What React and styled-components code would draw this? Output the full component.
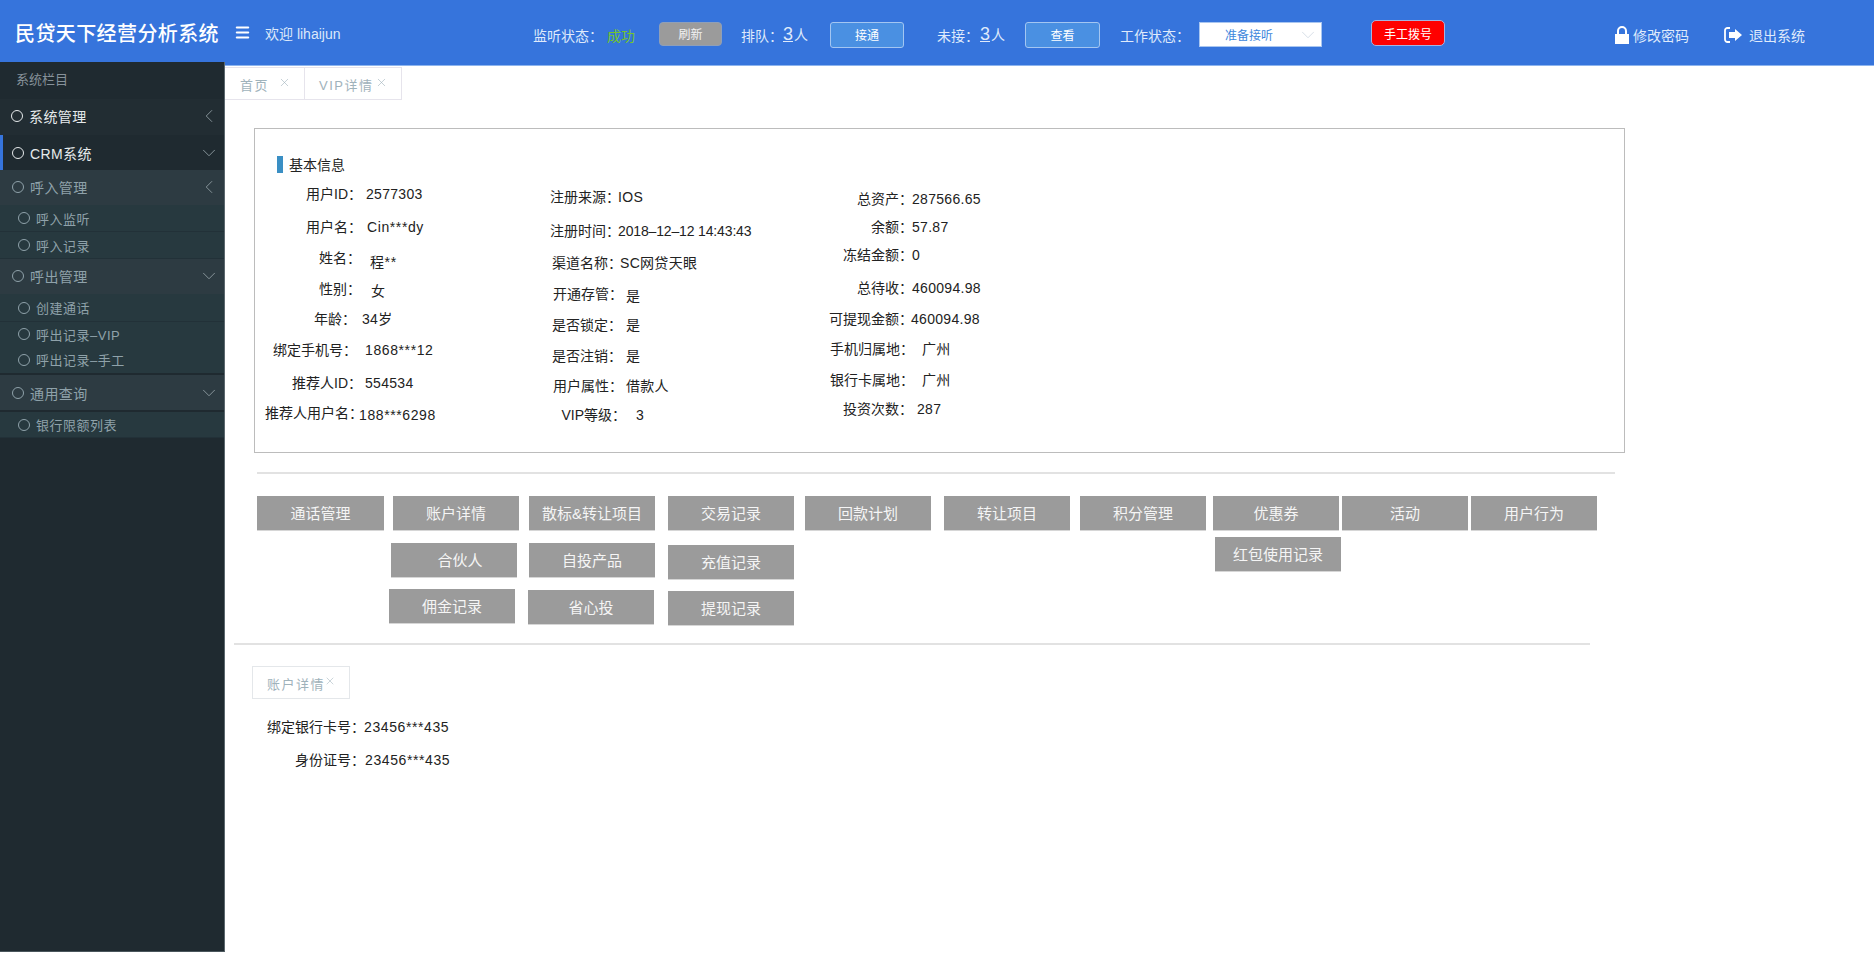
import React from "react";
import styled, { createGlobalStyle } from "styled-components";
import { ChevronDown, ChevronLeft, Menu, X } from "lucide-react";

const FONT = `"Liberation Sans", "Noto Sans CJK SC", sans-serif`;

const column1 = [
  ["用户ID：", "2577303", 6, 362, 366],
  ["用户名：", "Cin***dy", 13, 362, 367],
  ["姓名：", "程**", 11, 361, 370, 4],
  ["性别：", "女", 11, 361, 371, 2],
  ["年龄：", "34岁", 10, 356, 362],
  ["绑定手机号：", "1868***12", 11, 357, 365],
  ["推荐人ID：", "554534", 13, 362, 365],
  ["推荐人用户名：", "188***6298", 10, 363, 359, 2],
];

const column2 = [
  ["注册来源：", "IOS", 9, 620, 618],
  ["注册时间：", "2018–12–12 14:43:43", 14, 620, 618],
  ["渠道名称：", "SC网贷天眼", 12, 622, 620],
  ["开通存管：", "是", 11, 623, 626, 2],
  ["是否锁定：", "是", 11, 622, 626],
  ["是否注销：", "是", 11, 622, 626],
  ["用户属性：", "借款人", 10, 623, 626],
  ["VIP等级：", "3", 9, 626, 636],
];

const column3 = [
  ["总资产：", "287566.65", 11, 913, 912],
  ["余额：", "57.87", 8, 913, 912],
  ["冻结金额：", "0", 8, 913, 912],
  ["总待收：", "460094.98", 13, 913, 912],
  ["可提现金额：", "460094.98", 11, 913, 911],
  ["手机归属地：", "广州", 10, 914, 922],
  ["银行卡属地：", "广州", 11, 914, 922],
  ["投资次数：", "287", 9, 913, 917],
];

const accountRows = [
  ["绑定银行卡号：", "23456***435", 18, 365, 364],
  ["身份证号：", "23456***435", 13, 365, 365],
];

const actionColumns = [
  { ml: 32, w: 128, items: [{ t: "通话管理", w: 127 }] },
  {
    ml: 4,
    w: 130,
    items: [
      { t: "账户详情", ml: 4 },
      { t: "合伙人", ml: 2, mt: 12, pl: 12 },
      { t: "佣金记录", mt: 11 },
    ],
  },
  {
    ml: 9,
    w: 127,
    items: [
      { t: "散标&转让项目", ml: 1 },
      { t: "自投产品", ml: 1, mt: 12 },
      { t: "省心投", mt: 12 },
    ],
  },
  {
    ml: 13,
    w: 126,
    items: [{ t: "交易记录" }, { t: "充值记录", mt: 14 }, { t: "提现记录", mt: 11 }],
  },
  { ml: 11, w: 126, items: [{ t: "回款计划" }] },
  { ml: 13, w: 126, items: [{ t: "转让项目" }] },
  { ml: 10, w: 126, items: [{ t: "积分管理" }] },
  {
    ml: 7,
    w: 128,
    items: [{ t: "优惠券" }, { t: "红包使用记录", ml: 2, mt: 6 }],
  },
  { ml: 1, w: 126, items: [{ t: "活动" }] },
  { ml: 3, w: 126, items: [{ t: "用户行为" }] },
];

function App() {
  return (
    <Page>
      <GlobalStyle />
      <Header>
        <Slot $w={219}>
          <Brand>民贷天下经营分析系统</Brand>
        </Slot>
        <Slot $w={31}>
          <Menu size={17} strokeWidth={3} color="#fff" />
        </Slot>
        <Slot $w={269}>
          <Welcome>欢迎 lihaijun</Welcome>
        </Slot>
        <Toolbar>
          <Slot $w={74}>
            <HeadText>监听状态：</HeadText>
          </Slot>
          <Slot $w={52}>
            <StatusOk>成功</StatusOk>
          </Slot>
          <Slot $w={82}>
            <RefreshButton>刷新</RefreshButton>
          </Slot>
          <Slot $w={41}>
            <HeadText>排队：</HeadText>
          </Slot>
          <Slot $w={47}>
            <HeadText>
              <Count>3</Count>人
            </HeadText>
          </Slot>
          <Slot $w={107}>
            <BlueButton $w={74}>接通</BlueButton>
          </Slot>
          <Slot $w={43}>
            <HeadText>未接：</HeadText>
          </Slot>
          <Slot $w={45}>
            <HeadText>
              <Count>3</Count>人
            </HeadText>
          </Slot>
          <Slot $w={95}>
            <BlueButton $w={75}>查看</BlueButton>
          </Slot>
          <Slot $w={79}>
            <HeadText>工作状态：</HeadText>
          </Slot>
          <Slot $w={172}>
            <StateSelect>
              准备接听
              <ChevronDown size={22} strokeWidth={0.8} color="#c9d3df" />
            </StateSelect>
          </Slot>
          <Slot $w={244}>
            <DialButton>手工拨号</DialButton>
          </Slot>
          <Slot $w={109}>
            <HeadLink $gap={4}>
              <svg width="14" height="18" viewBox="0 0 14 18">
                <path
                  d="M0 8h2V5a5 5 0 0 1 10 0v3h2v10H0zM4 8h6V5a3 3 0 0 0-6 0z"
                  fill="#fff"
                  fillRule="evenodd"
                />
              </svg>
              修改密码
            </HeadLink>
          </Slot>
          <Slot $w={90}>
            <HeadLink $gap={7}>
              <svg width="18" height="16" viewBox="0 0 18 16">
                <path
                  d="M6 1H3.5A2.5 2.5 0 0 0 1 3.5v9A2.5 2.5 0 0 0 3.5 15H6"
                  fill="none"
                  stroke="#fff"
                  strokeWidth="1.8"
                />
                <path d="M5 5h6V2l7 6-7 6v-3H5z" fill="#fff" />
              </svg>
              退出系统
            </HeadLink>
          </Slot>
        </Toolbar>
      </Header>
      <Body>
        <Sidebar>
          <SideTitle>系统栏目</SideTitle>
          <TopItem>
            <Dot />
            系统管理
            <Caret>
              <ChevronLeft size={22} strokeWidth={1} />
            </Caret>
          </TopItem>
          <ActiveItem>
            <Dot />
            CRM系统
            <Caret>
              <ChevronDown size={22} strokeWidth={1} />
            </Caret>
          </ActiveItem>
          <GroupItem>
            <Dot />
            呼入管理
            <Caret>
              <ChevronLeft size={22} strokeWidth={1} />
            </Caret>
          </GroupItem>
          <SubItem>
            <Dot />
            呼入监听
          </SubItem>
          <SubItem>
            <Dot />
            呼入记录
          </SubItem>
          <GroupItem>
            <Dot />
            呼出管理
            <Caret>
              <ChevronDown size={22} strokeWidth={1} />
            </Caret>
          </GroupItem>
          <SubItem $h={28}>
            <Dot />
            创建通话
          </SubItem>
          <SubItem $h={25} $flat>
            <Dot />
            呼出记录–VIP
          </SubItem>
          <SubItem $h={26} $flat>
            <Dot />
            呼出记录–手工
          </SubItem>
          <GroupItem $dark>
            <Dot />
            通用查询
            <Caret>
              <ChevronDown size={22} strokeWidth={1} />
            </Caret>
          </GroupItem>
          <SubItem $h={28} $dark>
            <Dot />
            银行限额列表
          </SubItem>
        </Sidebar>
        <Main>
          <TabBar>
            <Tab $w={79} $first>
              首页
              <TabClose $ml={9}>
                <X size={13} strokeWidth={1.1} />
              </TabClose>
            </Tab>
            <Tab $w={98}>
              VIP详情
              <TabClose $ml={2}>
                <X size={13} strokeWidth={1.1} />
              </TabClose>
            </Tab>
          </TabBar>
          <InfoPanel>
            <PanelTitle>基本信息</PanelTitle>
            <InfoColumns>
              <InfoColumn $w={285}>
                {column1.map((row) => (
                  <InfoRow key={row[0]} row={row} start={265} />
                ))}
              </InfoColumn>
              <InfoColumn $w={279}>
                {column2.map((row) => (
                  <InfoRow key={row[0]} row={row} start={550} />
                ))}
              </InfoColumn>
              <InfoColumn $w={300}>
                {column3.map((row) => (
                  <InfoRow key={row[0]} row={row} start={829} />
                ))}
              </InfoColumn>
            </InfoColumns>
          </InfoPanel>
          <Divider $mt={19} $ml={32} $w={1358} />
          <Actions>
            {actionColumns.map((col) => (
              <ActionColumn key={col.items[0].t} $ml={col.ml} $w={col.w}>
                {col.items.map((item) => (
                  <ActionButton
                    key={item.t}
                    $w={item.w || 126}
                    $ml={item.ml || 0}
                    $mt={item.mt || 0}
                    $pl={item.pl || 0}
                  >
                    {item.t}
                  </ActionButton>
                ))}
              </ActionColumn>
            ))}
          </Actions>
          <Divider $mt={17} $ml={9} $w={1356} />
          <SubTab>
            账户详情
            <SubTabClose>
              <X size={12} strokeWidth={1.1} />
            </SubTabClose>
          </SubTab>
          <AccountList>
            {accountRows.map((row) => (
              <InfoRow key={row[0]} row={row} start={267} />
            ))}
          </AccountList>
        </Main>
      </Body>
    </Page>
  );
}

// the reference font draws asterisks wider and dashes longer than Liberation Sans
function valueSpacing(value) {
  if (value.includes("*")) return 0.6;
  if (value.includes("–")) return -0.15;
  return 0.3;
}

function InfoRow({ row, start }) {
  const [label, value, top, labelEnd, valueStart, drop] = row;
  return (
    <Row $mt={top}>
      <RowLabel $w={labelEnd - start}>{label}</RowLabel>
      <RowValue
        $ml={valueStart - labelEnd}
        $mt={drop || 0}
        $spacing={valueSpacing(value)}
      >
        {value}
      </RowValue>
    </Row>
  );
}

const GlobalStyle = createGlobalStyle`
  html, body {
    margin: 0;
    padding: 0;
    background: #fff;
    font-family: ${FONT};
  }
  * {
    box-sizing: border-box;
  }
`;

const Page = styled.div`
  width: 1874px;
  height: 967px;
  overflow: hidden;
`;

const Header = styled.div`
  display: flex;
  align-items: center;
  height: 66px;
  padding-left: 15px;
  background: #3674dc;
  border-bottom: 1px solid #8db4ee;
`;

const Slot = styled.div`
  flex: 0 0 ${(p) => p.$w}px;
  display: flex;
  align-items: center;
`;

const Brand = styled.div`
  font-size: 20px;
  font-weight: 500;
  letter-spacing: 0.4px;
  color: #fff;
  white-space: nowrap;
`;

const Welcome = styled.div`
  font-size: 14px;
  color: #dce8fa;
  white-space: nowrap;
`;

const Toolbar = styled.div`
  display: flex;
  align-items: center;
  margin-left: -1px;
  padding-top: 4px;
`;

const HeadText = styled.div`
  font-size: 14px;
  color: #dfeafb;
  white-space: nowrap;
`;

const Count = styled.span`
  font-size: 18px;
  font-weight: 300;
  text-decoration: underline;
  margin-right: 1px;
`;

const StatusOk = styled.div`
  font-size: 14px;
  color: #74c52b;
`;

const RefreshButton = styled.div`
  width: 63px;
  height: 24px;
  margin-bottom: 2px;
  display: flex;
  align-items: center;
  justify-content: center;
  background: #9b9b9b;
  border: 1px solid #8f9fb8;
  border-radius: 4px;
  font-size: 12px;
  color: #f2f2f2;
`;

const BlueButton = styled.div`
  width: ${(p) => p.$w}px;
  height: 26px;
  display: flex;
  align-items: center;
  justify-content: center;
  background: #4a90e2;
  border: 1px solid #a3c6f2;
  border-radius: 3px;
  font-size: 12px;
  color: #fff;
`;

const StateSelect = styled.div`
  width: 123px;
  height: 25px;
  display: flex;
  align-items: center;
  justify-content: space-between;
  padding: 0 2px 0 25px;
  background: #fff;
  border: 1px solid #a9c6f0;
  font-size: 12px;
  color: #3d87dc;
`;

const DialButton = styled.div`
  width: 74px;
  height: 26px;
  margin-bottom: 3px;
  display: flex;
  align-items: center;
  justify-content: center;
  background: #ff0000;
  border: 1px solid #a5b4e0;
  border-radius: 5px;
  font-size: 12px;
  color: #fff;
`;

const HeadLink = styled.div`
  display: flex;
  align-items: center;
  gap: ${(p) => p.$gap}px;
  font-size: 14px;
  color: #dfeafb;
  white-space: nowrap;
`;

const Body = styled.div`
  display: flex;
  align-items: flex-start;
`;

const Sidebar = styled.div`
  position: relative;
  flex: 0 0 225px;
  height: 890px;
  margin-top: -4px;
  background: #1f2a30;
  border-right: 1px solid #5c686e;
  border-bottom: 1px solid #4a565c;
`;

const SideTitle = styled.div`
  height: 37px;
  padding-left: 16px;
  line-height: 36px;
  font-size: 13px;
  color: #87929a;
`;

const Dot = styled.span`
  flex: 0 0 12px;
  width: 12px;
  height: 12px;
  margin-right: 6px;
  border: 1px solid currentColor;
  border-radius: 50%;
`;

const NavRow = styled.div`
  display: flex;
  align-items: center;
  white-space: nowrap;
`;

const TopItem = styled(NavRow)`
  height: 36px;
  padding: 0 0 2px 11px;
  background: #222d33;
  font-size: 14px;
  letter-spacing: 0.4px;
  color: #e6eaec;
`;

const ActiveItem = styled(NavRow)`
  height: 35px;
  padding-left: 9px;
  background: #1f2a30;
  border-left: 3px solid #3674dc;
  font-size: 14px;
  letter-spacing: 0.4px;
  color: #e6eaec;
`;

const GroupItem = styled(NavRow)`
  height: ${(p) => (p.$dark ? 37 : 35)}px;
  padding: 0 0 ${(p) => (p.$dark ? 0 : 2)}px 12px;
  background: #2d3b42;
  border-top: ${(p) => (p.$dark ? "2px solid #1f2a30" : "none")};
  font-size: 14px;
  letter-spacing: 0.4px;
  color: #8fa2aa;
`;

const SubItem = styled(NavRow)`
  height: ${(p) => p.$h || 27}px;
  padding-left: 18px;
  background: #27393f;
  border-top: ${(p) => (p.$dark ? "2px solid #1f2a30" : "none")};
  border-bottom: 1px solid ${(p) => (p.$flat ? "#27393f" : "#223138")};
  font-size: 13px;
  letter-spacing: 0.5px;
  color: #8fa2aa;
`;

const Caret = styled.span`
  display: flex;
  margin-left: auto;
  margin-right: 4px;
  color: #8d9aa0;
`;

const Main = styled.div`
  flex: 1;
  min-width: 0;
`;

const TabBar = styled.div`
  display: flex;
  margin-top: 1px;
`;

const Tab = styled.div`
  flex: 0 0 ${(p) => p.$w}px;
  height: 33px;
  display: flex;
  align-items: center;
  padding: 2px 0 0 ${(p) => (p.$first ? 15 : 14)}px;
  border: 1px solid #e6e4ec;
  border-left-width: ${(p) => (p.$first ? 0 : 1)}px;
  border-right-width: ${(p) => (p.$first ? 0 : 1)}px;
  font-size: 13px;
  letter-spacing: 1.5px;
  color: #9fb2bb;
  white-space: nowrap;
`;

const TabClose = styled.span`
  display: flex;
  margin: -4px 0 0 ${(p) => p.$ml}px;
`;

const InfoPanel = styled.div`
  width: 1371px;
  height: 325px;
  margin: 28px 0 0 29px;
  padding: 27px 0 0 10px;
  border: 1px solid #bcbcbc;
`;

const PanelTitle = styled.div`
  height: 17px;
  margin-left: 12px;
  padding-left: 6px;
  border-left: 6px solid #3a8fc4;
  line-height: 19px;
  font-size: 14px;
  color: #222;
`;

const InfoColumns = styled.div`
  display: flex;
  margin-top: 5px;
`;

const InfoColumn = styled.div`
  flex: 0 0 ${(p) => p.$w}px;
`;

const Row = styled.div`
  display: flex;
  align-items: flex-start;
  height: 20px;
  margin-top: ${(p) => p.$mt}px;
  line-height: 20px;
  font-size: 14px;
  color: #222;
  white-space: nowrap;
`;

const RowLabel = styled.div`
  flex: 0 0 ${(p) => p.$w}px;
  text-align: right;
`;

const RowValue = styled.div`
  margin-left: ${(p) => p.$ml}px;
  margin-top: ${(p) => p.$mt}px;
  letter-spacing: ${(p) => p.$spacing}px;
`;

const Divider = styled.div`
  width: ${(p) => p.$w}px;
  height: 2px;
  margin-top: ${(p) => p.$mt}px;
  margin-left: ${(p) => p.$ml}px;
  background: #e2e2e2;
`;

const Actions = styled.div`
  display: flex;
  align-items: flex-start;
  height: 130px;
  margin-top: 22px;
`;

const ActionColumn = styled.div`
  flex: 0 0 ${(p) => p.$w}px;
  margin-left: ${(p) => p.$ml}px;
`;

const ActionButton = styled.div`
  width: ${(p) => p.$w}px;
  height: 35px;
  margin-left: ${(p) => p.$ml}px;
  margin-top: ${(p) => p.$mt}px;
  padding: 0 0 2px ${(p) => p.$pl}px;
  display: flex;
  align-items: center;
  justify-content: center;
  background: #9b9b9b;
  border-bottom: 1px solid #d6d6d6;
  font-size: 15px;
  color: #f5f5f5;
  white-space: nowrap;
`;

const SubTab = styled.div`
  width: 98px;
  height: 33px;
  margin: 21px 0 0 27px;
  padding: 2px 0 0 14px;
  display: flex;
  align-items: center;
  border: 1px solid #e4e7ea;
  font-size: 13px;
  letter-spacing: 1.5px;
  color: #9fb2bb;
  white-space: nowrap;
`;

const SubTabClose = styled.span`
  display: flex;
  margin: -6px 0 0 -1px;
`;

const AccountList = styled.div`
  margin-left: 42px;
`;

export default App;
